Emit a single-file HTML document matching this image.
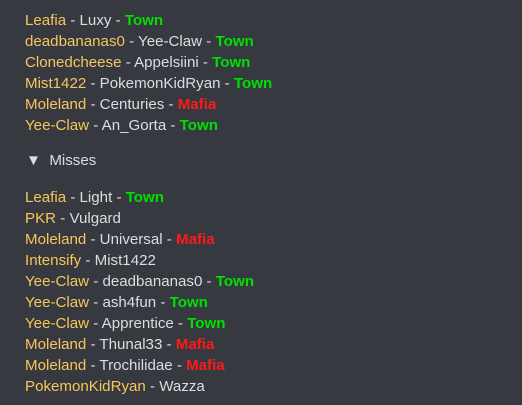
<!DOCTYPE html>
<html><head><style>
body{margin:0;background:#36393f;width:522px;height:405px;overflow:hidden;font-family:"Liberation Sans",Arial,sans-serif;font-size:15.1px;color:#dcddde}
.w{position:absolute;left:25px;top:10px;line-height:21px}
.y{color:#f8c65c}.t{color:#00e000;font-weight:bold}.m{color:#ff1a1a;font-weight:bold}
.s{height:14px}.s2{height:16px}
.h{padding-left:1px;height:21px}
</style></head><body><div class="w">
<div><span class="y">Leafia</span> - Luxy - <span class="t">Town</span></div>
<div><span class="y">deadbananas0</span> - Yee-Claw - <span class="t">Town</span></div>
<div><span class="y">Clonedcheese</span> - Appelsiini - <span class="t">Town</span></div>
<div><span class="y">Mist1422</span> - PokemonKidRyan - <span class="t">Town</span></div>
<div><span class="y">Moleland</span> - Centuries - <span class="m">Mafia</span></div>
<div><span class="y">Yee-Claw</span> - An_Gorta - <span class="t">Town</span></div>
<div class="s"></div>
<div class="h">▼ &nbsp;Misses</div>
<div class="s2"></div>
<div><span class="y">Leafia</span> - Light - <span class="t">Town</span></div>
<div><span class="y">PKR</span> - Vulgard</div>
<div><span class="y">Moleland</span> - Universal - <span class="m">Mafia</span></div>
<div><span class="y">Intensify</span> - Mist1422</div>
<div><span class="y">Yee-Claw</span> - deadbananas0 - <span class="t">Town</span></div>
<div><span class="y">Yee-Claw</span> - ash4fun - <span class="t">Town</span></div>
<div><span class="y">Yee-Claw</span> - Apprentice - <span class="t">Town</span></div>
<div><span class="y">Moleland</span> - Thunal33 - <span class="m">Mafia</span></div>
<div><span class="y">Moleland</span> - Trochilidae - <span class="m">Mafia</span></div>
<div><span class="y">PokemonKidRyan</span> - Wazza</div>
</div></body></html>
